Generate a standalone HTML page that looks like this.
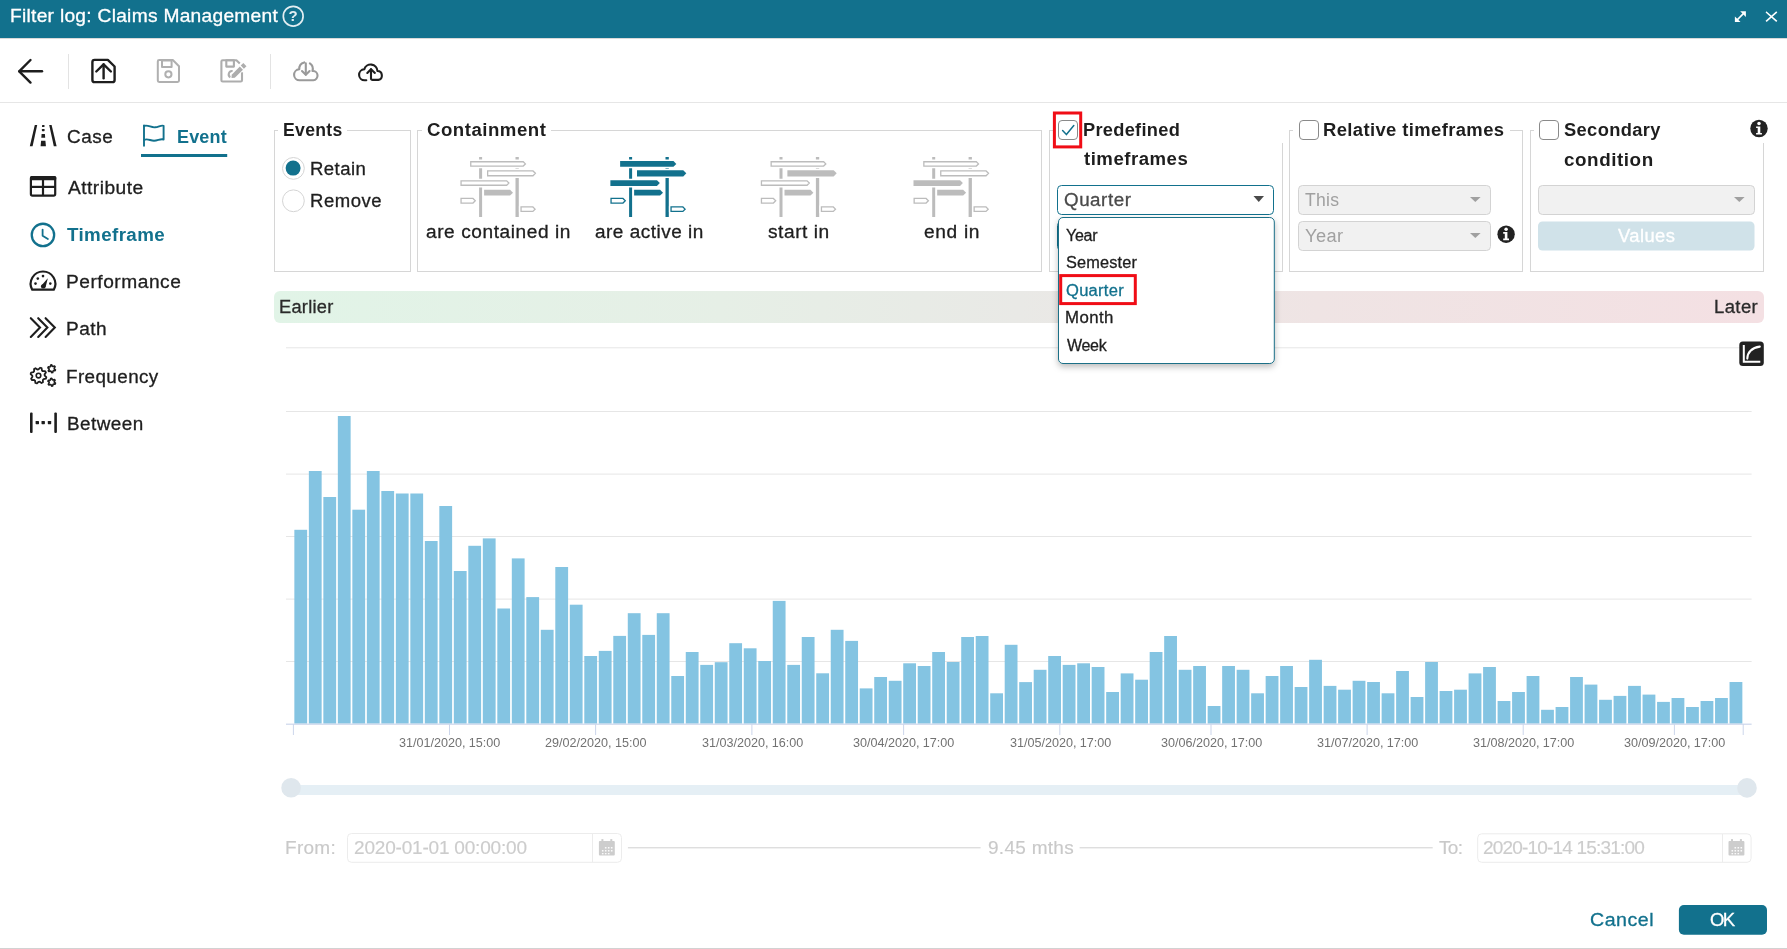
<!DOCTYPE html>
<html><head><meta charset="utf-8"><style>
html,body{margin:0;padding:0;background:#fff;width:1787px;height:949px;overflow:hidden;}
.t{position:absolute;white-space:nowrap;font-family:"Liberation Sans",sans-serif;will-change:transform;}
svg{position:absolute;left:0;top:0;}
</style></head><body>
<svg width="1787" height="949" viewBox="0 0 1787 949"><defs><filter id="sh" x="-10%" y="-10%" width="120%" height="140%"><feDropShadow dx="0" dy="3" stdDeviation="3" flood-color="#000" flood-opacity="0.26"/></filter></defs><rect x="0" y="0" width="1787" height="38" fill="#12718d"/><rect x="0" y="38" width="1787" height="1" fill="#d9d9d9"/></svg>
<div class="t" style="left:9.53px;top:4px;font-size:18.5px;line-height:24px;-webkit-text-stroke:0.3px #fff;color:#fff;letter-spacing:0.262px;transform:scaleX(1.0373);transform-origin:0 0;">Filter log: Claims Management</div>
<svg width="1787" height="949" viewBox="0 0 1787 949"><circle cx="293.2" cy="16.2" r="9.9" fill="none" stroke="#e3eef2" stroke-width="1.7"/></svg>
<div class="t" style="left:286px;top:5px;width:14px;text-align:center;font-size:15px;line-height:22px;font-weight:bold;color:#e3eef2">?</div>
<svg width="1787" height="949" viewBox="0 0 1787 949"><g stroke="#fff" stroke-width="1.6" fill="none" stroke-linecap="square"><line x1="1737.5" y1="19.5" x2="1743.5" y2="13.5"/><polygon points="1740.2,11.3 1745.9,11.3 1745.9,17" fill="#fff" stroke="none"/><polygon points="1734.9,16.6 1734.9,22.1 1740.5,22.1" fill="#fff" stroke="none"/><line x1="1766.7" y1="12.5" x2="1776.2" y2="20.8"/><line x1="1776.2" y1="12.5" x2="1766.7" y2="20.8"/></g><rect x="0" y="102" width="1787" height="1" fill="#e6e6e6"/><rect x="68" y="54" width="1" height="35" fill="#e3e3e3"/><rect x="270" y="54" width="1" height="35" fill="#e3e3e3"/><g stroke="#1e1e1e" stroke-width="2.4" fill="none" stroke-linecap="round" stroke-linejoin="round"><line x1="19.5" y1="71.3" x2="42" y2="71.3"/><polyline points="30.5,60 19.2,71.3 30.5,82.6"/></g><g stroke="#1e1e1e" stroke-width="2.4" fill="none" stroke-linecap="round" stroke-linejoin="round"><path d="M94.6,59.9 H107.8 L114.6,66.5 V79.9 A2.2,2.2 0 0 1 112.4,82.1 H94.6 A2.2,2.2 0 0 1 92.4,79.9 V62.1 A2.2,2.2 0 0 1 94.6,59.9 Z"/><line x1="103.6" y1="64.5" x2="103.6" y2="78.3"/><polyline points="96.3,71.5 103.6,64.3 110.9,71.5"/></g><g stroke="#b0b0b0" stroke-width="2" fill="none" stroke-linejoin="round"><path d="M159.2,60 H172.8 L179,66.2 V80.6 A1.4,1.4 0 0 1 177.6,82 H159.2 A1.4,1.4 0 0 1 157.8,80.6 V61.4 A1.4,1.4 0 0 1 159.2,60 Z"/><rect x="162" y="60.5" width="9.6" height="6.5"/><circle cx="168.4" cy="74.3" r="3.1"/></g><g stroke="#adadad" stroke-width="2.1" fill="none" stroke-linejoin="round" stroke-linecap="butt"><path d="M239.8,63.5 L236.4,60.3 H222.7 A1.3,1.3 0 0 0 221.4,61.6 V80.2 A1.3,1.3 0 0 0 222.7,81.5 H240.7 A1.3,1.3 0 0 0 242,80.2 V72.3"/><rect x="226.3" y="60.3" width="7.6" height="6.3"/><path d="M232.6,71.0 A3.4,3.4 0 0 0 230.4,77.3"/></g><g fill="#adadad" stroke="#fff" stroke-width="1.6" paint-order="stroke" stroke-linejoin="round"><polygon points="231.5,78 231.71,74.67 239.84,66.54 242.96,69.66 234.83,77.79"/><polygon points="240.76,65.62 243.37,63.01 246.49,66.13 243.88,68.74"/></g><g transform="translate(293,61)" stroke="#9a9a9a" stroke-width="2.1" fill="none" stroke-linecap="round" stroke-linejoin="round"><path d="M11.25,1.43 A6.75,6.75 0 0 0 6.26,8.31 A5.5,5.5 0 0 0 6.6,19.3 H20.3 A4.5,4.5 0 0 0 19.44,10.0 A6.75,6.75 0 0 0 16.87,2.42"/><line x1="12.8" y1="2.4" x2="12.8" y2="13.6"/><polyline points="9,10 12.8,13.8 16.6,10"/></g><g transform="translate(358,61)" stroke="#1e1e1e" stroke-width="2.1" fill="none" stroke-linecap="round" stroke-linejoin="round"><path d="M8.3,19.3 H6.6 A5.5,5.5 0 0 1 6.26,8.31 A6.75,6.75 0 0 1 19.44,10.0 A4.5,4.5 0 0 1 20.3,18.9 H14.5 A1.5,1.5 0 0 1 13,17.4 V8.4"/><polyline points="9.3,11.9 13,8.2 16.9,11.9"/></g><g fill="#1e1e1e"><polygon points="34.8,125 37.2,125 32.6,146.3 29.8,146.3"/><polygon points="49.2,125 51.6,125 56.6,146.3 53.8,146.3"/><rect x="42" y="125" width="2.5" height="1.9" rx="0.5"/><rect x="41.9" y="128.9" width="2.7" height="2.3" rx="0.6"/><polygon points="41.6,133.9 44.9,133.9 45.2,137.8 41.3,137.8"/><polygon points="41.1,140.7 45.4,140.7 45.9,146.3 40.6,146.3"/></g></svg>
<div class="t" style="left:67.04px;top:126px;font-size:18px;line-height:23px;-webkit-text-stroke:0.3px #1e1e1e;color:#1e1e1e;letter-spacing:0.541px;transform:scaleX(1.0518);transform-origin:0 0;">Case</div>
<svg width="1787" height="949" viewBox="0 0 1787 949"><g stroke="#12718d" stroke-width="1.9" fill="none" stroke-linejoin="round" stroke-linecap="round"><line x1="144" y1="125.5" x2="144" y2="145.8"/><path d="M144,126 C148,124.5 151,127.8 155,127.3 C159,126.8 161,125 163.6,125.8 V139.5 C160,138.5 158,140.8 154,140.8 C150,140.6 148,138.4 144,139.8"/></g></svg>
<div class="t" style="left:177.40px;top:126px;font-size:18px;line-height:23px;font-weight:bold;color:#12718d;letter-spacing:0.152px;">Event</div>
<svg width="1787" height="949" viewBox="0 0 1787 949"><rect x="141" y="154" width="86.2" height="3" fill="#12718d"/><g stroke="#1e1e1e" stroke-width="2.2" fill="none"><rect x="30.9" y="177" width="24.3" height="18.7" rx="1.6"/><line x1="31" y1="186.9" x2="55" y2="186.9"/><line x1="43" y1="180" x2="43" y2="195.5"/></g><rect x="30" y="176" width="26.3" height="4.2" rx="1.5" fill="#1e1e1e"/></svg>
<div class="t" style="left:67.96px;top:177px;font-size:18px;line-height:23px;-webkit-text-stroke:0.3px #1e1e1e;color:#1e1e1e;letter-spacing:0.422px;transform:scaleX(1.0665);transform-origin:0 0;">Attribute</div>
<svg width="1787" height="949" viewBox="0 0 1787 949"><g stroke="#12718d" stroke-width="2.3" fill="none" stroke-linecap="round"><circle cx="42.95" cy="234.95" r="11.2"/></g><polyline points="42.6,229.6 42.6,235.7 47.9,239.1" fill="none" stroke="#12718d" stroke-width="1.8" stroke-linecap="round" stroke-linejoin="round"/></svg>
<div class="t" style="left:66.59px;top:224px;font-size:18px;line-height:23px;font-weight:bold;color:#12718d;letter-spacing:0.377px;transform:scaleX(1.0426);transform-origin:0 0;">Timeframe</div>
<svg width="1787" height="949" viewBox="0 0 1787 949"><g stroke="#1e1e1e" stroke-width="2.2" fill="none" stroke-linejoin="round"><path d="M32.2,289.7 A12.3,12.3 0 1 1 53.8,289.7 Z"/></g><g fill="#1e1e1e"><circle cx="37.8" cy="278.6" r="1.3"/><circle cx="43" cy="276.1" r="1.3"/><circle cx="35.5" cy="283.6" r="1.3"/><circle cx="50.3" cy="283.6" r="1.3"/><path d="M40.6,286.5 L47.8,278.2 L45.5,287.5 Z"/><circle cx="43.2" cy="286.4" r="2.2"/></g></svg>
<div class="t" style="left:66.23px;top:271px;font-size:18px;line-height:23px;-webkit-text-stroke:0.3px #1e1e1e;color:#1e1e1e;letter-spacing:0.492px;transform:scaleX(1.0635);transform-origin:0 0;">Performance</div>
<svg width="1787" height="949" viewBox="0 0 1787 949"><g stroke="#1e1e1e" stroke-width="2.1" fill="none" stroke-linecap="round" stroke-linejoin="miter"><polyline points="30.8,318.2 40,327.6 30.8,337"/><polyline points="38.2,318.2 47.4,327.6 38.2,337"/><polyline points="45.6,318.2 54.8,327.6 45.6,337"/></g></svg>
<div class="t" style="left:66.44px;top:318px;font-size:18px;line-height:23px;-webkit-text-stroke:0.3px #1e1e1e;color:#1e1e1e;letter-spacing:0.499px;transform:scaleX(1.0563);transform-origin:0 0;">Path</div>
<svg width="1787" height="949" viewBox="0 0 1787 949"><polygon points="44.70,375.60 46.35,377.16 45.89,378.66 43.66,379.04 42.88,379.98 42.94,382.25 41.56,382.99 39.71,381.68 38.50,381.80 36.94,383.45 35.44,382.99 35.06,380.76 34.12,379.98 31.85,380.04 31.11,378.66 32.42,376.81 32.30,375.60 30.65,374.04 31.11,372.54 33.34,372.16 34.12,371.22 34.06,368.95 35.44,368.21 37.29,369.52 38.50,369.40 40.06,367.75 41.56,368.21 41.94,370.44 42.88,371.22 45.15,371.16 45.89,372.54 44.58,374.39" fill="none" stroke="#1e1e1e" stroke-width="1.8" stroke-linejoin="round"/><circle cx="38.5" cy="375.6" r="2.3" fill="none" stroke="#1e1e1e" stroke-width="1.6"/><polygon points="54.30,368.80 55.47,369.81 55.08,370.75 53.54,370.64 53.00,371.05 52.71,372.57 51.70,372.70 51.03,371.31 50.40,371.05 48.94,371.56 48.32,370.75 49.19,369.47 49.10,368.80 47.93,367.79 48.32,366.85 49.86,366.96 50.40,366.55 50.69,365.03 51.70,364.90 52.37,366.29 53.00,366.55 54.46,366.04 55.08,366.85 54.21,368.13" fill="none" stroke="#1e1e1e" stroke-width="1.6" stroke-linejoin="round"/><polygon points="54.30,382.20 55.47,383.21 55.08,384.15 53.54,384.04 53.00,384.45 52.71,385.97 51.70,386.10 51.03,384.71 50.40,384.45 48.94,384.96 48.32,384.15 49.19,382.87 49.10,382.20 47.93,381.19 48.32,380.25 49.86,380.36 50.40,379.95 50.69,378.43 51.70,378.30 52.37,379.69 53.00,379.95 54.46,379.44 55.08,380.25 54.21,381.53" fill="none" stroke="#1e1e1e" stroke-width="1.6" stroke-linejoin="round"/></svg>
<div class="t" style="left:66.45px;top:366px;font-size:18px;line-height:23px;-webkit-text-stroke:0.3px #1e1e1e;color:#1e1e1e;letter-spacing:0.385px;transform:scaleX(1.0472);transform-origin:0 0;">Frequency</div>
<svg width="1787" height="949" viewBox="0 0 1787 949"><g fill="#1e1e1e"><rect x="30" y="412.4" width="2.6" height="20.6" rx="1"/><rect x="54.3" y="412.4" width="2.6" height="20.6" rx="1"/><rect x="35.6" y="421" width="3.4" height="3.2" rx="0.6"/><rect x="41.5" y="421" width="3.4" height="3.2" rx="0.6"/><rect x="47.8" y="421" width="3.4" height="3.2" rx="0.6"/></g></svg>
<div class="t" style="left:67.15px;top:413px;font-size:18px;line-height:23px;-webkit-text-stroke:0.3px #1e1e1e;color:#1e1e1e;letter-spacing:0.429px;transform:scaleX(1.0489);transform-origin:0 0;">Between</div>
<svg width="1787" height="949" viewBox="0 0 1787 949"><rect x="274" y="130" width="1" height="142" fill="#d6d6d6"/><rect x="410" y="130" width="1" height="142" fill="#d6d6d6"/><rect x="274" y="271" width="137" height="1" fill="#d6d6d6"/><rect x="274" y="130" width="4" height="1" fill="#d6d6d6"/><rect x="347" y="130" width="64" height="1" fill="#d6d6d6"/></svg>
<div class="t" style="left:282.62px;top:119px;font-size:17.6px;line-height:22px;font-weight:bold;color:#1e1e1e;letter-spacing:0.317px;">Events</div>
<svg width="1787" height="949" viewBox="0 0 1787 949"><circle cx="293.4" cy="168.4" r="10.9" fill="#fff" stroke="#d4d4d4" stroke-width="1"/><circle cx="293.1" cy="168.1" r="7.5" fill="#12718d"/><circle cx="293.4" cy="200.8" r="10.9" fill="#fff" stroke="#d4d4d4" stroke-width="1"/></svg>
<div class="t" style="left:310.38px;top:158px;font-size:17.6px;line-height:22px;-webkit-text-stroke:0.3px #1e1e1e;color:#1e1e1e;letter-spacing:0.411px;transform:scaleX(1.0548);transform-origin:0 0;">Retain</div>
<div class="t" style="left:310.38px;top:190px;font-size:17.6px;line-height:22px;-webkit-text-stroke:0.3px #1e1e1e;color:#1e1e1e;letter-spacing:0.512px;transform:scaleX(1.0520);transform-origin:0 0;">Remove</div>
<svg width="1787" height="949" viewBox="0 0 1787 949"><rect x="417" y="130" width="1" height="142" fill="#d6d6d6"/><rect x="1041" y="130" width="1" height="142" fill="#d6d6d6"/><rect x="417" y="271" width="625" height="1" fill="#d6d6d6"/><rect x="417" y="130" width="5" height="1" fill="#d6d6d6"/><rect x="551" y="130" width="491" height="1" fill="#d6d6d6"/></svg>
<div class="t" style="left:426.54px;top:119px;font-size:17.6px;line-height:22px;font-weight:bold;color:#1e1e1e;letter-spacing:0.480px;transform:scaleX(1.0582);transform-origin:0 0;">Containment</div>
<svg width="1787" height="949" viewBox="0 0 1787 949"><g transform="translate(460,157)"><rect x="19.1" y="0" width="3" height="60" fill="#bcbcbc"/><rect x="55.5" y="0" width="3.3" height="60" fill="#bcbcbc"/><polygon points="10.10,4.10 63.50,4.10 66.30,6.90 63.50,9.70 10.10,9.70" fill="#fff" stroke="#fff" stroke-width="3" stroke-linejoin="round"/><polygon points="10.75,4.75 63.24,4.75 65.39,6.90 63.24,9.05 10.75,9.05" fill="#fff" stroke="#bcbcbc" stroke-width="1.3"/><polygon points="27.00,13.30 73.25,13.30 76.30,16.35 73.25,19.40 27.00,19.40" fill="#fff" stroke="#fff" stroke-width="3" stroke-linejoin="round"/><polygon points="27.65,13.95 72.99,13.95 75.39,16.35 72.99,18.75 27.65,18.75" fill="#fff" stroke="#bcbcbc" stroke-width="1.3"/><polygon points="0.40,23.20 46.95,23.20 49.80,26.05 46.95,28.90 0.40,28.90" fill="#fff" stroke="#fff" stroke-width="3" stroke-linejoin="round"/><polygon points="1.05,23.85 46.69,23.85 48.89,26.05 46.69,28.25 1.05,28.25" fill="#fff" stroke="#bcbcbc" stroke-width="1.3"/><polygon points="24.10,32.70 50.05,32.70 53.00,35.65 50.05,38.60 24.10,38.60" fill="#fff" stroke="#fff" stroke-width="3" stroke-linejoin="round"/><polygon points="24.10,32.70 50.05,32.70 53.00,35.65 50.05,38.60 24.10,38.60" fill="#bcbcbc"/><polygon points="0.40,40.80 13.25,40.80 16.20,43.75 13.25,46.70 0.40,46.70" fill="#fff" stroke="#fff" stroke-width="3" stroke-linejoin="round"/><polygon points="1.05,41.45 12.99,41.45 15.29,43.75 12.99,46.05 1.05,46.05" fill="#fff" stroke="#bcbcbc" stroke-width="1.3"/><polygon points="60.40,49.30 73.15,49.30 76.00,52.15 73.15,55.00 60.40,55.00" fill="#fff" stroke="#fff" stroke-width="3" stroke-linejoin="round"/><polygon points="61.05,49.95 72.89,49.95 75.09,52.15 72.89,54.35 61.05,54.35" fill="#fff" stroke="#bcbcbc" stroke-width="1.3"/></g><g transform="translate(610,157)"><rect x="19.1" y="0" width="3" height="60" fill="#12718d"/><rect x="55.5" y="0" width="3.3" height="60" fill="#12718d"/><polygon points="10.10,4.10 63.50,4.10 66.30,6.90 63.50,9.70 10.10,9.70" fill="#fff" stroke="#fff" stroke-width="3" stroke-linejoin="round"/><polygon points="10.10,4.10 63.50,4.10 66.30,6.90 63.50,9.70 10.10,9.70" fill="#12718d"/><polygon points="27.00,13.30 73.25,13.30 76.30,16.35 73.25,19.40 27.00,19.40" fill="#fff" stroke="#fff" stroke-width="3" stroke-linejoin="round"/><polygon points="27.00,13.30 73.25,13.30 76.30,16.35 73.25,19.40 27.00,19.40" fill="#12718d"/><polygon points="0.40,23.20 46.95,23.20 49.80,26.05 46.95,28.90 0.40,28.90" fill="#fff" stroke="#fff" stroke-width="3" stroke-linejoin="round"/><polygon points="0.40,23.20 46.95,23.20 49.80,26.05 46.95,28.90 0.40,28.90" fill="#12718d"/><polygon points="24.10,32.70 50.05,32.70 53.00,35.65 50.05,38.60 24.10,38.60" fill="#fff" stroke="#fff" stroke-width="3" stroke-linejoin="round"/><polygon points="24.10,32.70 50.05,32.70 53.00,35.65 50.05,38.60 24.10,38.60" fill="#12718d"/><polygon points="0.40,40.80 13.25,40.80 16.20,43.75 13.25,46.70 0.40,46.70" fill="#fff" stroke="#fff" stroke-width="3" stroke-linejoin="round"/><polygon points="1.05,41.45 12.99,41.45 15.29,43.75 12.99,46.05 1.05,46.05" fill="#fff" stroke="#12718d" stroke-width="1.3"/><polygon points="60.40,49.30 73.15,49.30 76.00,52.15 73.15,55.00 60.40,55.00" fill="#fff" stroke="#fff" stroke-width="3" stroke-linejoin="round"/><polygon points="61.05,49.95 72.89,49.95 75.09,52.15 72.89,54.35 61.05,54.35" fill="#fff" stroke="#12718d" stroke-width="1.3"/></g><g transform="translate(760.4,157)"><rect x="19.1" y="0" width="3" height="60" fill="#bcbcbc"/><rect x="55.5" y="0" width="3.3" height="60" fill="#bcbcbc"/><polygon points="10.10,4.10 63.50,4.10 66.30,6.90 63.50,9.70 10.10,9.70" fill="#fff" stroke="#fff" stroke-width="3" stroke-linejoin="round"/><polygon points="10.75,4.75 63.24,4.75 65.39,6.90 63.24,9.05 10.75,9.05" fill="#fff" stroke="#bcbcbc" stroke-width="1.3"/><polygon points="27.00,13.30 73.25,13.30 76.30,16.35 73.25,19.40 27.00,19.40" fill="#fff" stroke="#fff" stroke-width="3" stroke-linejoin="round"/><polygon points="27.00,13.30 73.25,13.30 76.30,16.35 73.25,19.40 27.00,19.40" fill="#bcbcbc"/><polygon points="0.40,23.20 46.95,23.20 49.80,26.05 46.95,28.90 0.40,28.90" fill="#fff" stroke="#fff" stroke-width="3" stroke-linejoin="round"/><polygon points="1.05,23.85 46.69,23.85 48.89,26.05 46.69,28.25 1.05,28.25" fill="#fff" stroke="#bcbcbc" stroke-width="1.3"/><polygon points="24.10,32.70 50.05,32.70 53.00,35.65 50.05,38.60 24.10,38.60" fill="#fff" stroke="#fff" stroke-width="3" stroke-linejoin="round"/><polygon points="24.10,32.70 50.05,32.70 53.00,35.65 50.05,38.60 24.10,38.60" fill="#bcbcbc"/><polygon points="0.40,40.80 13.25,40.80 16.20,43.75 13.25,46.70 0.40,46.70" fill="#fff" stroke="#fff" stroke-width="3" stroke-linejoin="round"/><polygon points="1.05,41.45 12.99,41.45 15.29,43.75 12.99,46.05 1.05,46.05" fill="#fff" stroke="#bcbcbc" stroke-width="1.3"/><polygon points="60.40,49.30 73.15,49.30 76.00,52.15 73.15,55.00 60.40,55.00" fill="#fff" stroke="#fff" stroke-width="3" stroke-linejoin="round"/><polygon points="61.05,49.95 72.89,49.95 75.09,52.15 72.89,54.35 61.05,54.35" fill="#fff" stroke="#bcbcbc" stroke-width="1.3"/></g><g transform="translate(913.1,157)"><rect x="19.1" y="0" width="3" height="60" fill="#bcbcbc"/><rect x="55.5" y="0" width="3.3" height="60" fill="#bcbcbc"/><polygon points="10.10,4.10 63.50,4.10 66.30,6.90 63.50,9.70 10.10,9.70" fill="#fff" stroke="#fff" stroke-width="3" stroke-linejoin="round"/><polygon points="10.75,4.75 63.24,4.75 65.39,6.90 63.24,9.05 10.75,9.05" fill="#fff" stroke="#bcbcbc" stroke-width="1.3"/><polygon points="27.00,13.30 73.25,13.30 76.30,16.35 73.25,19.40 27.00,19.40" fill="#fff" stroke="#fff" stroke-width="3" stroke-linejoin="round"/><polygon points="27.65,13.95 72.99,13.95 75.39,16.35 72.99,18.75 27.65,18.75" fill="#fff" stroke="#bcbcbc" stroke-width="1.3"/><polygon points="0.40,23.20 46.95,23.20 49.80,26.05 46.95,28.90 0.40,28.90" fill="#fff" stroke="#fff" stroke-width="3" stroke-linejoin="round"/><polygon points="0.40,23.20 46.95,23.20 49.80,26.05 46.95,28.90 0.40,28.90" fill="#bcbcbc"/><polygon points="24.10,32.70 50.05,32.70 53.00,35.65 50.05,38.60 24.10,38.60" fill="#fff" stroke="#fff" stroke-width="3" stroke-linejoin="round"/><polygon points="24.10,32.70 50.05,32.70 53.00,35.65 50.05,38.60 24.10,38.60" fill="#bcbcbc"/><polygon points="0.40,40.80 13.25,40.80 16.20,43.75 13.25,46.70 0.40,46.70" fill="#fff" stroke="#fff" stroke-width="3" stroke-linejoin="round"/><polygon points="1.05,41.45 12.99,41.45 15.29,43.75 12.99,46.05 1.05,46.05" fill="#fff" stroke="#bcbcbc" stroke-width="1.3"/><polygon points="60.40,49.30 73.15,49.30 76.00,52.15 73.15,55.00 60.40,55.00" fill="#fff" stroke="#fff" stroke-width="3" stroke-linejoin="round"/><polygon points="61.05,49.95 72.89,49.95 75.09,52.15 72.89,54.35 61.05,54.35" fill="#fff" stroke="#bcbcbc" stroke-width="1.3"/></g></svg>
<div class="t" style="left:426.19px;top:221px;font-size:17.6px;line-height:22px;-webkit-text-stroke:0.3px #1e1e1e;color:#1e1e1e;letter-spacing:0.527px;transform:scaleX(1.0849);transform-origin:0 0;">are contained in</div>
<div class="t" style="left:594.59px;top:221px;font-size:17.6px;line-height:22px;-webkit-text-stroke:0.3px #1e1e1e;color:#1e1e1e;letter-spacing:0.462px;transform:scaleX(1.0786);transform-origin:0 0;">are active in</div>
<div class="t" style="left:768.37px;top:221px;font-size:17.6px;line-height:22px;-webkit-text-stroke:0.3px #1e1e1e;color:#1e1e1e;letter-spacing:0.485px;transform:scaleX(1.0883);transform-origin:0 0;">start in</div>
<div class="t" style="left:923.79px;top:221px;font-size:17.6px;line-height:22px;-webkit-text-stroke:0.3px #1e1e1e;color:#1e1e1e;letter-spacing:0.607px;transform:scaleX(1.0876);transform-origin:0 0;">end in</div>
<svg width="1787" height="949" viewBox="0 0 1787 949"><rect x="1049" y="130" width="1" height="142" fill="#d6d6d6"/><rect x="1282" y="143" width="1" height="129" fill="#d6d6d6"/><rect x="1049" y="271" width="234" height="1" fill="#d6d6d6"/><rect x="1049" y="130" width="4" height="1" fill="#d6d6d6"/><rect x="1058.5" y="120.5" width="19" height="19" rx="3.5" fill="#fff" stroke="#8a8a8a" stroke-width="1"/><polyline points="1062.6,130.6 1066.4,134.6 1073.8,125.6" fill="none" stroke="#12718d" stroke-width="1.5" stroke-linecap="round" stroke-linejoin="round"/><rect x="1054.4" y="113" width="26.3" height="33.9" fill="none" stroke="#f00d16" stroke-width="3"/></svg>
<div class="t" style="left:1082.98px;top:119px;font-size:17.6px;line-height:22px;font-weight:bold;color:#1e1e1e;letter-spacing:0.279px;transform:scaleX(1.0359);transform-origin:0 0;">Predefined</div>
<div class="t" style="left:1083.97px;top:148px;font-size:17.6px;line-height:22px;font-weight:bold;color:#1e1e1e;letter-spacing:0.464px;transform:scaleX(1.0581);transform-origin:0 0;">timeframes</div>
<svg width="1787" height="949" viewBox="0 0 1787 949"><rect x="1057.5" y="185.5" width="216" height="29" rx="4" fill="#fff" stroke="#12718d" stroke-width="1"/></svg>
<div class="t" style="left:1064.01px;top:189px;font-size:17.6px;line-height:22px;-webkit-text-stroke:0.3px #4a4a4a;color:#4a4a4a;letter-spacing:0.503px;transform:scaleX(1.0673);transform-origin:0 0;">Quarter</div>
<svg width="1787" height="949" viewBox="0 0 1787 949"><polygon points="1253.5,196 1264,196 1258.75,202" fill="#4a4a4a"/><rect x="1057.5" y="221.5" width="216" height="29" rx="4" fill="#fff" stroke="#12718d" stroke-width="1"/><rect x="1289" y="130" width="1" height="142" fill="#d6d6d6"/><rect x="1522" y="130" width="1" height="142" fill="#d6d6d6"/><rect x="1289" y="271" width="234" height="1" fill="#d6d6d6"/><rect x="1289" y="130" width="4" height="1" fill="#d6d6d6"/><rect x="1510" y="130" width="13" height="1" fill="#d6d6d6"/><rect x="1299.5" y="120.5" width="19" height="19" rx="3.5" fill="#fff" stroke="#8a8a8a" stroke-width="1"/></svg>
<div class="t" style="left:1323.06px;top:119px;font-size:17.6px;line-height:22px;font-weight:bold;color:#1e1e1e;letter-spacing:0.350px;transform:scaleX(1.0492);transform-origin:0 0;">Relative timeframes</div>
<svg width="1787" height="949" viewBox="0 0 1787 949"><rect x="1298.5" y="185.5" width="192" height="29" rx="4" fill="#f1f1f1" stroke="#d3d3d3" stroke-width="1"/><rect x="1298.5" y="221.5" width="192" height="29" rx="4" fill="#f1f1f1" stroke="#d3d3d3" stroke-width="1"/></svg>
<div class="t" style="left:1304.60px;top:189px;font-size:17.6px;line-height:22px;color:#a0a0a0;letter-spacing:0.261px;">This</div>
<div class="t" style="left:1304.60px;top:225px;font-size:17.6px;line-height:22px;color:#a0a0a0;letter-spacing:0.362px;transform:scaleX(1.0377);transform-origin:0 0;">Year</div>
<svg width="1787" height="949" viewBox="0 0 1787 949"><polygon points="1470,197 1480.6,197 1475.3,202" fill="#a0a0a0"/><polygon points="1470,233 1480.6,233 1475.3,238" fill="#a0a0a0"/><circle cx="1506.1" cy="234.2" r="8.7" fill="#222"/><circle cx="1506.1" cy="229.29999999999998" r="1.75" fill="#fff"/><path d="M1503.1999999999998,232.1 H1507.3999999999999 V238.6 H1509.0 V240.29999999999998 H1503.1999999999998 V238.6 H1504.8 V233.79999999999998 H1503.1999999999998 Z" fill="#fff"/><rect x="1530" y="130" width="1" height="142" fill="#d6d6d6"/><rect x="1763" y="143" width="1" height="129" fill="#d6d6d6"/><rect x="1530" y="271" width="234" height="1" fill="#d6d6d6"/><rect x="1530" y="130" width="4" height="1" fill="#d6d6d6"/><rect x="1539.5" y="120.5" width="19" height="19" rx="3.5" fill="#fff" stroke="#8a8a8a" stroke-width="1"/></svg>
<div class="t" style="left:1564.17px;top:119px;font-size:17.6px;line-height:22px;font-weight:bold;color:#1e1e1e;letter-spacing:0.352px;transform:scaleX(1.0400);transform-origin:0 0;">Secondary</div>
<div class="t" style="left:1563.96px;top:149px;font-size:17.6px;line-height:22px;font-weight:bold;color:#1e1e1e;letter-spacing:0.520px;transform:scaleX(1.0703);transform-origin:0 0;">condition</div>
<svg width="1787" height="949" viewBox="0 0 1787 949"><circle cx="1759" cy="128.5" r="8.7" fill="#222"/><circle cx="1759" cy="123.6" r="1.75" fill="#fff"/><path d="M1756.1,126.4 H1760.3 V132.9 H1761.9 V134.6 H1756.1 V132.9 H1757.7 V128.1 H1756.1 Z" fill="#fff"/><rect x="1538.5" y="185.5" width="216" height="29" rx="4" fill="#f1f1f1" stroke="#d3d3d3" stroke-width="1"/><polygon points="1734,197 1744.6,197 1739.3,202" fill="#a0a0a0"/><rect x="1538" y="221.5" width="216.5" height="29" rx="4.5" fill="#d0e2e9"/></svg>
<div class="t" style="left:1617.82px;top:225px;font-size:17.6px;line-height:22px;-webkit-text-stroke:0.3px #fff;color:#fff;letter-spacing:0.379px;transform:scaleX(1.0456);transform-origin:0 0;">Values</div>
<div style="position:absolute;left:274px;top:291px;width:1489.5px;height:31.8px;border-radius:6px;background:linear-gradient(90deg,#e1f4e7 0%,#e6efe6 30%,#e9e9e6 50%,#efe4e4 70%,#f4e0e3 100%);"></div>
<div class="t" style="left:278.90px;top:296px;font-size:17.6px;line-height:22px;-webkit-text-stroke:0.3px #2a2a2a;color:#2a2a2a;letter-spacing:0.244px;transform:scaleX(1.0378);transform-origin:0 0;">Earlier</div>
<div class="t" style="left:1713.68px;top:296px;font-size:17.6px;line-height:22px;-webkit-text-stroke:0.3px #2a2a2a;color:#2a2a2a;letter-spacing:0.377px;transform:scaleX(1.0504);transform-origin:0 0;">Later</div>
<svg width="1787" height="949" viewBox="0 0 1787 949"><rect x="286" y="347.3" width="1465.6" height="1" fill="#e6e6e6"/><rect x="286" y="411" width="1465.6" height="1" fill="#e6e6e6"/><rect x="286" y="473.6" width="1465.6" height="1" fill="#e6e6e6"/><rect x="286" y="536" width="1465.6" height="1" fill="#e6e6e6"/><rect x="286" y="598.6" width="1465.6" height="1" fill="#e6e6e6"/><rect x="286" y="661" width="1465.6" height="1" fill="#e6e6e6"/><g fill="#84c4e2"><rect x="294.35" y="529.8" width="12.80" height="193.8"/><rect x="308.85" y="471.0" width="12.80" height="252.6"/><rect x="323.34" y="497.0" width="12.80" height="226.6"/><rect x="337.84" y="416.0" width="12.80" height="307.6"/><rect x="352.34" y="509.7" width="12.80" height="213.9"/><rect x="366.84" y="471.0" width="12.80" height="252.6"/><rect x="381.33" y="491.0" width="12.80" height="232.6"/><rect x="395.83" y="493.5" width="12.80" height="230.1"/><rect x="410.33" y="493.5" width="12.80" height="230.1"/><rect x="424.82" y="541.0" width="12.80" height="182.6"/><rect x="439.32" y="506.0" width="12.80" height="217.6"/><rect x="453.82" y="571.0" width="12.80" height="152.6"/><rect x="468.31" y="545.8" width="12.80" height="177.8"/><rect x="482.81" y="538.4" width="12.80" height="185.2"/><rect x="497.31" y="608.5" width="12.80" height="115.1"/><rect x="511.81" y="558.4" width="12.80" height="165.2"/><rect x="526.30" y="597.1" width="12.80" height="126.5"/><rect x="540.80" y="629.8" width="12.80" height="93.8"/><rect x="555.30" y="567.0" width="12.80" height="156.6"/><rect x="569.79" y="604.7" width="12.80" height="118.9"/><rect x="584.29" y="656.0" width="12.80" height="67.6"/><rect x="598.79" y="650.9" width="12.80" height="72.7"/><rect x="613.28" y="635.9" width="12.80" height="87.7"/><rect x="627.78" y="613.2" width="12.80" height="110.4"/><rect x="642.28" y="634.9" width="12.80" height="88.7"/><rect x="656.77" y="613.2" width="12.80" height="110.4"/><rect x="671.27" y="676.0" width="12.80" height="47.6"/><rect x="685.77" y="652.0" width="12.80" height="71.6"/><rect x="700.27" y="664.9" width="12.80" height="58.7"/><rect x="714.76" y="662.2" width="12.80" height="61.4"/><rect x="729.26" y="643.2" width="12.80" height="80.4"/><rect x="743.76" y="648.3" width="12.80" height="75.3"/><rect x="758.25" y="661.0" width="12.80" height="62.6"/><rect x="772.75" y="600.9" width="12.80" height="122.7"/><rect x="787.25" y="664.9" width="12.80" height="58.7"/><rect x="801.75" y="637.0" width="12.80" height="86.6"/><rect x="816.24" y="673.3" width="12.80" height="50.3"/><rect x="830.74" y="629.8" width="12.80" height="93.8"/><rect x="845.24" y="640.9" width="12.80" height="82.7"/><rect x="859.73" y="688.4" width="12.80" height="35.2"/><rect x="874.23" y="677.0" width="12.80" height="46.6"/><rect x="888.73" y="680.8" width="12.80" height="42.8"/><rect x="903.22" y="663.3" width="12.80" height="60.3"/><rect x="917.72" y="666.0" width="12.80" height="57.6"/><rect x="932.22" y="652.0" width="12.80" height="71.6"/><rect x="946.72" y="662.0" width="12.80" height="61.6"/><rect x="961.21" y="637.0" width="12.80" height="86.6"/><rect x="975.71" y="636.0" width="12.80" height="87.6"/><rect x="990.21" y="693.3" width="12.80" height="30.3"/><rect x="1004.70" y="644.8" width="12.80" height="78.8"/><rect x="1019.20" y="682.1" width="12.80" height="41.5"/><rect x="1033.70" y="669.8" width="12.80" height="53.8"/><rect x="1048.19" y="656.0" width="12.80" height="67.6"/><rect x="1062.69" y="664.9" width="12.80" height="58.7"/><rect x="1077.19" y="663.3" width="12.80" height="60.3"/><rect x="1091.68" y="667.0" width="12.80" height="56.6"/><rect x="1106.18" y="692.0" width="12.80" height="31.6"/><rect x="1120.68" y="673.4" width="12.80" height="50.2"/><rect x="1135.18" y="679.7" width="12.80" height="43.9"/><rect x="1149.67" y="652.0" width="12.80" height="71.6"/><rect x="1164.17" y="636.0" width="12.80" height="87.6"/><rect x="1178.67" y="669.8" width="12.80" height="53.8"/><rect x="1193.16" y="666.0" width="12.80" height="57.6"/><rect x="1207.66" y="706.0" width="12.80" height="17.6"/><rect x="1222.16" y="666.0" width="12.80" height="57.6"/><rect x="1236.65" y="669.8" width="12.80" height="53.8"/><rect x="1251.15" y="693.3" width="12.80" height="30.3"/><rect x="1265.65" y="676.0" width="12.80" height="47.6"/><rect x="1280.15" y="666.0" width="12.80" height="57.6"/><rect x="1294.64" y="687.0" width="12.80" height="36.6"/><rect x="1309.14" y="659.8" width="12.80" height="63.8"/><rect x="1323.64" y="685.9" width="12.80" height="37.7"/><rect x="1338.13" y="689.7" width="12.80" height="33.9"/><rect x="1352.63" y="680.8" width="12.80" height="42.8"/><rect x="1367.13" y="682.0" width="12.80" height="41.6"/><rect x="1381.62" y="693.3" width="12.80" height="30.3"/><rect x="1396.12" y="671.0" width="12.80" height="52.6"/><rect x="1410.62" y="697.0" width="12.80" height="26.6"/><rect x="1425.12" y="662.0" width="12.80" height="61.6"/><rect x="1439.61" y="691.0" width="12.80" height="32.6"/><rect x="1454.11" y="689.7" width="12.80" height="33.9"/><rect x="1468.61" y="673.4" width="12.80" height="50.2"/><rect x="1483.10" y="667.0" width="12.80" height="56.6"/><rect x="1497.60" y="701.0" width="12.80" height="22.6"/><rect x="1512.10" y="692.0" width="12.80" height="31.6"/><rect x="1526.59" y="676.0" width="12.80" height="47.6"/><rect x="1541.09" y="709.8" width="12.80" height="13.8"/><rect x="1555.59" y="707.0" width="12.80" height="16.6"/><rect x="1570.09" y="677.0" width="12.80" height="46.6"/><rect x="1584.58" y="684.6" width="12.80" height="39.0"/><rect x="1599.08" y="699.8" width="12.80" height="23.8"/><rect x="1613.58" y="695.9" width="12.80" height="27.7"/><rect x="1628.07" y="685.9" width="12.80" height="37.7"/><rect x="1642.57" y="694.6" width="12.80" height="29.0"/><rect x="1657.07" y="701.9" width="12.80" height="21.7"/><rect x="1671.56" y="698.0" width="12.80" height="25.6"/><rect x="1686.06" y="707.0" width="12.80" height="16.6"/><rect x="1700.56" y="701.0" width="12.80" height="22.6"/><rect x="1715.06" y="698.0" width="12.80" height="25.6"/><rect x="1729.55" y="682.0" width="12.80" height="41.6"/></g><rect x="286" y="723.6" width="1465.6" height="1.2" fill="#ccd6eb"/><rect x="292.9" y="724" width="1" height="11" fill="#ccd6eb"/><rect x="449.0" y="724" width="1" height="11" fill="#ccd6eb"/><rect x="595.1" y="724" width="1" height="11" fill="#ccd6eb"/><rect x="751.4" y="724" width="1" height="11" fill="#ccd6eb"/><rect x="903.1" y="724" width="1" height="11" fill="#ccd6eb"/><rect x="1059.3" y="724" width="1" height="11" fill="#ccd6eb"/><rect x="1210.5" y="724" width="1" height="11" fill="#ccd6eb"/><rect x="1366.6" y="724" width="1" height="11" fill="#ccd6eb"/><rect x="1522.7" y="724" width="1" height="11" fill="#ccd6eb"/><rect x="1673.9" y="724" width="1" height="11" fill="#ccd6eb"/><rect x="1742.7" y="724" width="1" height="11" fill="#ccd6eb"/></svg>
<div class="t" style="left:399.32px;top:735px;font-size:12.6px;line-height:16px;color:#727272;letter-spacing:-0.014px;">31/01/2020, 15:00</div>
<div class="t" style="left:545.27px;top:735px;font-size:12.6px;line-height:16px;color:#727272;letter-spacing:-0.004px;">29/02/2020, 15:00</div>
<div class="t" style="left:701.72px;top:735px;font-size:12.6px;line-height:16px;color:#727272;letter-spacing:-0.014px;">31/03/2020, 16:00</div>
<div class="t" style="left:853.42px;top:735px;font-size:12.6px;line-height:16px;color:#727272;letter-spacing:-0.014px;">30/04/2020, 17:00</div>
<div class="t" style="left:1009.62px;top:735px;font-size:12.6px;line-height:16px;color:#727272;letter-spacing:-0.014px;">31/05/2020, 17:00</div>
<div class="t" style="left:1160.82px;top:735px;font-size:12.6px;line-height:16px;color:#727272;letter-spacing:-0.014px;">30/06/2020, 17:00</div>
<div class="t" style="left:1316.92px;top:735px;font-size:12.6px;line-height:16px;color:#727272;letter-spacing:-0.014px;">31/07/2020, 17:00</div>
<div class="t" style="left:1473.02px;top:735px;font-size:12.6px;line-height:16px;color:#727272;letter-spacing:-0.014px;">31/08/2020, 17:00</div>
<div class="t" style="left:1624.22px;top:735px;font-size:12.6px;line-height:16px;color:#727272;letter-spacing:-0.014px;">30/09/2020, 17:00</div>
<svg width="1787" height="949" viewBox="0 0 1787 949"><rect x="1739.3" y="341.5" width="24.5" height="24.6" rx="3.6" fill="#222"/><path d="M1743.8,345 V361.8 H1760.3" fill="none" stroke="#fff" stroke-width="2" stroke-linecap="butt" stroke-linejoin="miter"/><path d="M1747.3,358.6 C1747.3,352.5 1751.8,347.6 1759.8,346.6" fill="none" stroke="#fff" stroke-width="2.1" stroke-linecap="round"/><rect x="291" y="785" width="1456" height="10" rx="5" fill="#e5eff5"/><circle cx="291.1" cy="787.7" r="9.8" fill="#dfe7ed"/><circle cx="1747" cy="787.9" r="9.8" fill="#dfe7ed"/></svg>
<div class="t" style="left:285.04px;top:836px;font-size:19px;line-height:24px;-webkit-text-stroke:0.15px #c9c9c9;color:#c9c9c9;letter-spacing:0.272px;">From:</div>
<svg width="1787" height="949" viewBox="0 0 1787 949"><rect x="347.5" y="833.5" width="274" height="28.8" rx="4" fill="#fff" stroke="#ececec" stroke-width="1"/><rect x="592" y="834" width="1" height="28" fill="#ececec"/></svg>
<div class="t" style="left:353.54px;top:836px;font-size:19px;line-height:24px;-webkit-text-stroke:0.15px #cccccc;color:#cccccc;letter-spacing:-0.191px;">2020-01-01 00:00:00</div>
<svg width="1787" height="949" viewBox="0 0 1787 949"><g transform="translate(598.9,839.1)"><rect x="0" y="2" width="15.9" height="14.5" rx="1" fill="#cdcdcd"/><rect x="2.5" y="0" width="2" height="3" fill="#cdcdcd"/><rect x="11.4" y="0" width="2" height="3" fill="#cdcdcd"/><g fill="#fff"><rect x="6" y="8" width="1.6" height="1.4"/><rect x="9" y="8" width="1.6" height="1.4"/><rect x="12" y="8" width="1.6" height="1.4"/><rect x="3" y="11" width="1.6" height="1.4"/><rect x="6" y="11" width="1.6" height="1.4"/><rect x="9" y="11" width="1.6" height="1.4"/><rect x="12" y="11" width="1.6" height="1.4"/><rect x="3" y="14" width="1.6" height="1.2"/><rect x="6" y="14" width="1.6" height="1.2"/><rect x="9" y="14" width="1.6" height="1.2"/></g></g><rect x="627.9" y="847.3" width="352.7" height="1" fill="#d0d0d0"/></svg>
<div class="t" style="left:987.61px;top:836px;font-size:19px;line-height:24px;-webkit-text-stroke:0.15px #c9c9c9;color:#c9c9c9;letter-spacing:0.281px;">9.45 mths</div>
<svg width="1787" height="949" viewBox="0 0 1787 949"><rect x="1079.6" y="847.3" width="353.1" height="1" fill="#d0d0d0"/></svg>
<div class="t" style="left:1439.27px;top:836px;font-size:19px;line-height:24px;-webkit-text-stroke:0.15px #c9c9c9;color:#c9c9c9;letter-spacing:-0.645px;">To:</div>
<svg width="1787" height="949" viewBox="0 0 1787 949"><rect x="1477.7" y="833.8" width="273.4" height="28.5" rx="4" fill="#fff" stroke="#ececec" stroke-width="1"/><rect x="1722" y="834" width="1" height="28" fill="#ececec"/></svg>
<div class="t" style="left:1482.94px;top:836px;font-size:19px;line-height:24px;-webkit-text-stroke:0.15px #cccccc;color:#cccccc;letter-spacing:-0.818px;">2020-10-14 15:31:00</div>
<svg width="1787" height="949" viewBox="0 0 1787 949"><g transform="translate(1728.5,839.1)"><rect x="0" y="2" width="15.9" height="14.5" rx="1" fill="#cdcdcd"/><rect x="2.5" y="0" width="2" height="3" fill="#cdcdcd"/><rect x="11.4" y="0" width="2" height="3" fill="#cdcdcd"/><g fill="#fff"><rect x="6" y="8" width="1.6" height="1.4"/><rect x="9" y="8" width="1.6" height="1.4"/><rect x="12" y="8" width="1.6" height="1.4"/><rect x="3" y="11" width="1.6" height="1.4"/><rect x="6" y="11" width="1.6" height="1.4"/><rect x="9" y="11" width="1.6" height="1.4"/><rect x="12" y="11" width="1.6" height="1.4"/><rect x="3" y="14" width="1.6" height="1.2"/><rect x="6" y="14" width="1.6" height="1.2"/><rect x="9" y="14" width="1.6" height="1.2"/></g></g></svg>
<div class="t" style="left:1590.31px;top:908px;font-size:18.5px;line-height:24px;-webkit-text-stroke:0.3px #12718d;color:#12718d;letter-spacing:0.501px;transform:scaleX(1.0585);transform-origin:0 0;">Cancel</div>
<svg width="1787" height="949" viewBox="0 0 1787 949"><rect x="1678.9" y="905.1" width="88.1" height="29.7" rx="5" fill="#12718d"/></svg>
<div class="t" style="left:1710.02px;top:908px;font-size:18.5px;line-height:24px;-webkit-text-stroke:0.3px #fff;color:#fff;letter-spacing:-1.745px;">OK</div>
<svg width="1787" height="949" viewBox="0 0 1787 949"><rect x="0" y="948" width="1787" height="1" fill="#d2d2d2"/><rect x="1058.5" y="217.5" width="215.8" height="146" rx="4.5" fill="#fff" stroke="#1b6f87" stroke-width="1" filter="url(#sh)"/></svg>
<div class="t" style="left:1066.25px;top:226px;font-size:16px;line-height:20px;-webkit-text-stroke:0.3px #1e1e1e;color:#1e1e1e;letter-spacing:-0.260px;">Year</div>
<div class="t" style="left:1065.86px;top:253px;font-size:16px;line-height:20px;-webkit-text-stroke:0.3px #1e1e1e;color:#1e1e1e;letter-spacing:0.153px;transform:scaleX(1.0198);transform-origin:0 0;">Semester</div>
<div class="t" style="left:1065.82px;top:281px;font-size:16px;line-height:20px;-webkit-text-stroke:0.3px #12718d;color:#12718d;letter-spacing:0.245px;transform:scaleX(1.0349);transform-origin:0 0;">Quarter</div>
<div class="t" style="left:1065.22px;top:308px;font-size:16px;line-height:20px;-webkit-text-stroke:0.3px #1e1e1e;color:#1e1e1e;letter-spacing:0.406px;transform:scaleX(1.0494);transform-origin:0 0;">Month</div>
<div class="t" style="left:1066.53px;top:336px;font-size:16px;line-height:20px;-webkit-text-stroke:0.3px #1e1e1e;color:#1e1e1e;letter-spacing:-0.317px;">Week</div>
<svg width="1787" height="949" viewBox="0 0 1787 949"><rect x="1060.7" y="275.6" width="74.6" height="28" fill="none" stroke="#f00d16" stroke-width="3"/></svg>
</body></html>
